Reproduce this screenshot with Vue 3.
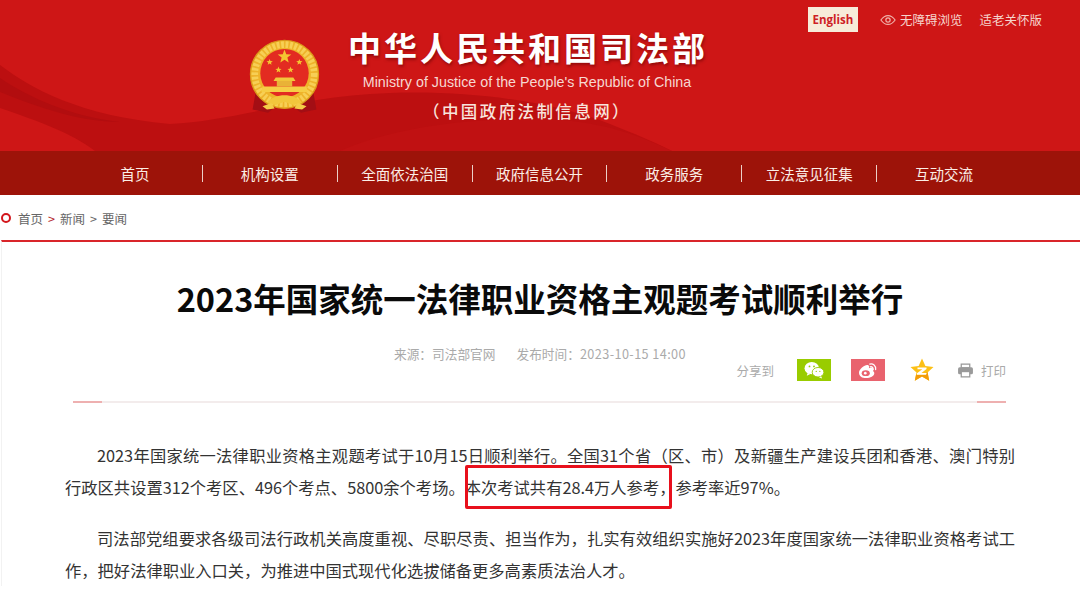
<template>
  <div class="page">
    <header class="banner">
      <svg class="swoosh" viewBox="0 0 1080 151" preserveAspectRatio="none" aria-hidden="true">
        <path d="M0 65C30 88 80 116 170 124C240 120 300 96 390 93C480 90 560 104 610 124C635 134 655 142 672 151L95 151C70 132 40 122 0 108Z" fill="#bc0f10" />
        <path d="M340 151C400 124 490 116 560 120C610 124 640 136 672 151Z" fill="#c01112" />
        <path d="M0 78C30 98 70 116 120 122C80 122 40 108 0 92Z" fill="#b20d0f" />
      </svg>
      <div class="toplinks">
        <a class="english">English</a>
        <a class="toplink">
          <svg class="eye" viewBox="0 0 18 12" aria-hidden="true">
            <path d="M1 6C3.500 2.400 6 1 9 1s5.500 1.400 8 5c-2.500 3.600-5 5-8 5S3.500 9.600 1 6Z" fill="none" stroke="#f0b0a8" stroke-width="1.300" />
            <circle cx="9" cy="6" r="2.400" fill="none" stroke="#f0b0a8" stroke-width="1.400" />
          </svg>
          无障碍浏览
        </a>
        <a class="toplink">适老关怀版</a>
      </div>
      <div class="brand">
        <svg class="emblem" viewBox="0 0 70 70" aria-hidden="true">
          <path d="M9 48L6 65L20 68L30 60ZM61 48L64 65L50 68L40 60Z" fill="#a30e14" />
          <circle cx="35" cy="33" r="31" fill="#eeb32a" />
          <circle cx="35" cy="33" r="27" fill="none" stroke="#f7cf55" stroke-width="6" stroke-dasharray="2.500 1.500" />
          <circle cx="35" cy="33" r="31" fill="none" stroke="#d99a1c" stroke-width="1" />
          <circle cx="35" cy="32" r="22" fill="#e32b21" />
          <polygon v-for="s in stars" :key="s.x" :points="starPoints(s)" fill="#f4c531" />
          <path d="M27 36h16l2 3H25Z" fill="#f2c63c" />
          <rect x="28" y="39" width="14" height="5" fill="#e9b237" />
          <path d="M15 44h40l1 5H14Z" fill="#f6cd46" />
          <path d="M19 59c4-5 10-7 16-7s12 2 16 7l-8 2-8-3-8 3Z" fill="#f2c63c" />
          <path d="M15 62l8-3 3 5-7 1ZM55 62l-8-3-3 5 7 1Z" fill="#f4cc48" />
        </svg>
        <div class="brand-text">
          <h1 class="brand-cn">中华人民共和国司法部</h1>
          <p class="brand-en">Ministry of Justice of the People's Republic of China</p>
          <p class="brand-sub">（中国政府法制信息网）</p>
        </div>
      </div>
    </header>

    <nav class="mainnav">
      <a v-for="item in navItems" :key="item" class="navitem">{{ item }}</a>
    </nav>

    <div class="crumbs">
      <span class="dot"></span>
      <span>首页</span><i>&gt;</i><span>新闻</span><i class="dark">&gt;</i><span>要闻</span>
    </div>

    <main class="article">
      <h2 class="title">2023年国家统一法律职业资格主观题考试顺利举行</h2>
      <div class="meta">
        <span>来源：司法部官网</span>
        <span>发布时间：<span class="time">2023-10-15 14:00</span></span>
      </div>
      <div class="share">
        <span class="share-label">分享到</span>
        <span class="chip wechat">
          <svg viewBox="0 0 24 20" aria-hidden="true">
            <ellipse cx="9.500" cy="8" rx="8" ry="6.800" fill="#fff" />
            <path d="M5 13l-1 3.500 4-2Z" fill="#fff" />
            <ellipse cx="16.500" cy="12.500" rx="6.500" ry="5.300" fill="#fff" stroke="#99cc00" stroke-width="1" />
            <path d="M20 17l1 2.500-3.500-1.500Z" fill="#fff" />
            <circle cx="7" cy="6" r="1" fill="#99cc00" /><circle cx="12" cy="6" r="1" fill="#99cc00" />
            <circle cx="14.500" cy="11.500" r=".8" fill="#99cc00" /><circle cx="18.500" cy="11.500" r=".8" fill="#99cc00" />
          </svg>
        </span>
        <span class="chip weibo">
          <svg viewBox="0 0 24 20" aria-hidden="true">
            <path d="M2 13c0-4 6-8.500 9-8.500 2.500 0 2.500 2 2 3.500 3-1 5-.5 5 1.500 0 .8-.5 1.300-.5 1.500 1 .5 1.500 1.500 1.500 2.500 0 3-4.500 5.500-9 5.500S2 17 2 13Z" fill="#fff" />
            <ellipse cx="9.500" cy="13.500" rx="4.500" ry="3.300" fill="#e9636e" />
            <circle cx="9" cy="13.500" r="1.500" fill="#fff" />
            <path d="M14 3.500c3.500-1 7 1.500 6.500 6M14.500 6.500c1.800-.5 3.500.8 3.200 3" fill="none" stroke="#fff" stroke-width="1.400" stroke-linecap="round" />
          </svg>
        </span>
        <span class="qzone">
          <svg viewBox="0 0 24 24" aria-hidden="true">
            <path d="M12 .5l3.400 7.500 8.100 1-6 5.500 1.700 8.200L12 18.500l-7.200 4.200 1.700-8.200-6-5.500 8.100-1Z" fill="#fcc016" />
            <path d="M4.800 22.700l1.200-6c4 .8 9-.5 11.600-2.800l1.600 8.800L12 18.500Z" fill="#f39c09" />
            <path d="M7.500 9.500h9v1.600l-5 3.900h5.200l-.7 1.800H7v-1.500l5.300-4H7.500Z" fill="#fff" />
          </svg>
        </span>
        <span class="print">
          <svg viewBox="0 0 16 14" aria-hidden="true">
            <rect x="4" y="1" width="8" height="3.500" fill="none" stroke="#9a9a9a" stroke-width="1.200" />
            <rect x="1" y="4" width="14" height="6.500" rx="1.500" fill="#9a9a9a" />
            <rect x="4" y="8" width="8" height="5" fill="#fff" stroke="#9a9a9a" stroke-width="1.200" />
          </svg>
          打印
        </span>
      </div>
      <div class="rule"></div>
      <div class="body">
        <p>2023年国家统一法律职业资格主观题考试于10月15日顺利举行。全国31个省（区、市）及新疆生产建设兵团和香港、澳门特别行政区共设置312个考区、496个考点、5800余个考场。<span class="marked">本次考试共有28.4万人参考，</span>参考率近97%。</p>
        <p>司法部党组要求各级司法行政机关高度重视、尽职尽责、担当作为，扎实有效组织实施好2023年度国家统一法律职业资格考试工作，把好法律职业入口关，为推进中国式现代化选拔储备更多高素质法治人才。</p>
      </div>
    </main>
  </div>
</template>

<script setup>
const navItems = ["首页", "机构设置", "全面依法治国", "政府信息公开", "政务服务", "立法意见征集", "互动交流"];

const stars = [
  { x: 35, y: 17, r: 6.5 },
  { x: 21.5, y: 22, r: 3 },
  { x: 48.5, y: 22, r: 3 },
  { x: 29.500, y: 29, r: 3 },
  { x: 40.500, y: 29, r: 3 },
];

function starPoints({ x, y, r }) {
  const pts = [];
  for (let i = 0; i < 10; i++) {
    const rad = i % 2 ? r * 0.42 : r;
    const a = (Math.PI / 5) * i - Math.PI / 2;
    pts.push(`${(x + rad * Math.cos(a)).toFixed(2)},${(y + rad * Math.sin(a)).toFixed(2)}`);
  }
  return pts.join(" ");
}
</script>

<style>
body {
  background: #fff;
}
</style>

<style scoped>
.page {
  width: 1080px;
  height: 607px;
  overflow: hidden;
  background: #fff;
  font-family: "Noto Sans CJK SC", "Noto Sans", sans-serif;
}
.banner {
  position: relative;
  height: 151px;
  background: #ce1616;
  overflow: hidden;
}
.swoosh {
  position: absolute;
  inset: 0;
  width: 100%;
  height: 100%;
}
.toplinks {
  position: absolute;
  top: 7px;
  right: 38px;
  display: flex;
  align-items: center;
  gap: 17px;
  font-size: 12.500px;
  color: #f6d5cd;
}
.english {
  width: 50px;
  height: 25px;
  margin-right: 5px;
  background: #f7ecd9;
  color: #ce1f26;
  font-family: "Open Sans", sans-serif;
  font-weight: 700;
  font-size: 11.500px;
  line-height: 25px;
  text-align: center;
}
.toplink {
  display: flex;
  align-items: center;
  gap: 4px;
}
.eye {
  width: 16px;
  height: 12px;
}
.brand {
  position: relative;
  display: flex;
  padding: 25px 0 0 246px;
}
.emblem {
  width: 77px;
  height: 77px;
  margin-top: 13px;
}
.brand-text {
  width: 358px;
  margin-left: 25px;
  text-align: center;
  color: #fff;
}
.brand-cn {
  margin: 0;
  font-size: 33px;
  line-height: 44px;
  font-weight: 700;
  letter-spacing: 3px;
  white-space: nowrap;
  text-shadow: 1px 2px 3px rgba(90, 0, 0, 0.5);
}
.brand-en {
  margin: 4px 0 0;
  font-family: "Liberation Sans", sans-serif;
  font-size: 14.300px;
  line-height: 18px;
  color: #f6d8d2;
  white-space: nowrap;
}
.brand-sub {
  margin: 9px 0 0;
  font-size: 16.500px;
  line-height: 22px;
  font-weight: 500;
  letter-spacing: 2.400px;
  color: #f8e3dc;
  white-space: nowrap;
}
.mainnav {
  display: flex;
  height: 44px;
  padding: 0 69px 0 68px;
  background: #9d1309;
  align-items: center;
}
.navitem {
  flex: 1;
  font-size: 14.500px;
  line-height: 17px;
  text-align: center;
  color: #fbeee6;
  border-right: 1.500px solid #ecd0c8;
}
.navitem:last-child {
  border-right: 0;
}
.crumbs {
  display: flex;
  align-items: center;
  box-sizing: border-box;
  height: 45px;
  padding: 1px 0 0 1px;
  font-size: 12.500px;
  color: #666;
}
.dot {
  width: 10px;
  height: 10px;
  margin-right: 7px;
  border: 2.500px solid #d3161c;
  border-radius: 50%;
  box-sizing: border-box;
}
.crumbs i {
  margin: 0 5px;
  font-style: normal;
  color: #b5262c;
}
.crumbs i.dark {
  color: #666;
}
.article {
  margin-left: 1px;
  border-top: 2px solid #d9252a;
  border-left: 1px solid #f2f2f2;
  padding-top: 34px;
}
.title {
  margin: 0;
  padding-right: 2px;
  font-size: 32.500px;
  line-height: 44px;
  font-weight: 700;
  text-align: center;
  color: #0a0a0a;
}
.meta {
  display: flex;
  justify-content: center;
  gap: 21px;
  margin-top: 25px;
  padding-right: 2px;
  font-size: 12.700px;
  line-height: 18px;
  color: #aaa;
}
.time {
  letter-spacing: 0.4px;
}
.share {
  display: flex;
  align-items: center;
  justify-content: flex-end;
  height: 24px;
  margin-top: -5px;
  padding-right: 74px;
  font-size: 12.500px;
  color: #aaa;
}
.chip {
  display: flex;
  align-items: center;
  justify-content: center;
  width: 34px;
  height: 22px;
}
.chip svg {
  width: 22px;
  height: 18px;
}
.wechat {
  margin-left: 23px;
  background: #99cc00;
}
.weibo {
  margin-left: 20px;
  background: #e9636e;
}
.qzone {
  display: flex;
  margin-left: 25px;
}
.qzone svg {
  width: 24px;
  height: 24px;
}
.print {
  display: flex;
  align-items: center;
  gap: 7px;
  margin-left: 23px;
}
.print svg {
  width: 17px;
  height: 15px;
}
.rule {
  position: relative;
  height: 2px;
  margin: 19px 74px 0 71px;
  background: #f3ecec;
}
.rule::before,
.rule::after {
  content: "";
  position: absolute;
  top: 0;
  width: 29px;
  height: 2px;
  background: #eeb0b0;
}
.rule::before {
  left: 0;
}
.rule::after {
  right: 0;
}
.body {
  padding: 36px 65px 0 63px;
  font-size: 16.300px;
  line-height: 32px;
  color: #333;
}
.body p {
  margin: 0 0 19px;
  text-indent: 32px;
  text-align: justify;
}
.marked {
  position: relative;
}
.marked::after {
  content: "";
  position: absolute;
  left: 0;
  right: 3px;
  top: -10px;
  bottom: -10px;
  border: 3px solid #e8101c;
  border-radius: 2px;
}
</style>
